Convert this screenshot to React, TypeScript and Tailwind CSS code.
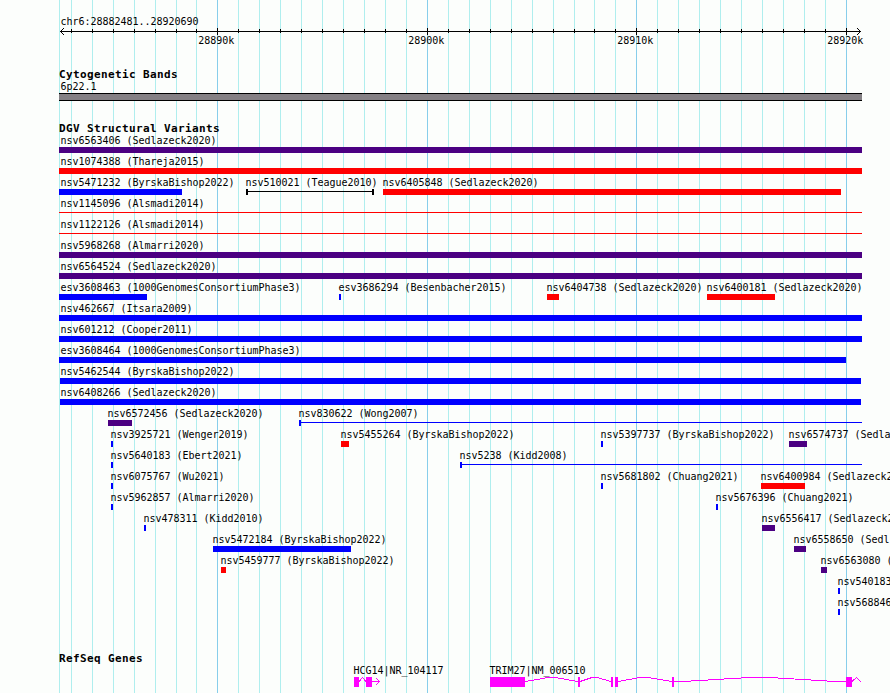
import React from "react";

type Glyph = "bar" | "line" | "span" | "open";

interface Feature {
  label: string;
  start: number;
  end: number;
  color: string;
  glyph?: Glyph;
}

const PURPLE = "bg-[#4b0082]";
const RED = "bg-[#ff0000]";
const BLUE = "bg-[#0000ff]";
const BLACK = "bg-black";

const LEFT = 59;
const RIGHT = 862;

const MINOR = [
  59, 71, 92, 113, 134, 155, 176, 196, 238, 259, 280, 301, 322, 343, 364, 385, 406, 448, 469, 490,
  511, 532, 553, 574, 594, 615, 657, 678, 699, 720, 741, 762, 783, 804, 825,
];
const MAJOR = [217, 427, 636, 846];
const SCALE_LABELS = ["28890k", "28900k", "28910k", "28920k"];

const f = (label: string, start: number, end: number, color: string, glyph: Glyph = "bar"): Feature => ({
  label,
  start,
  end,
  color,
  glyph,
});

const ROWS: Feature[][] = [
  [f("nsv6563406 (Sedlazeck2020)", 59, 862, PURPLE)],
  [f("nsv1074388 (Thareja2015)", 59, 862, RED)],
  [
    f("nsv5471232 (ByrskaBishop2022)", 59, 182, BLUE),
    f("nsv510021 (Teague2010)", 246, 374, BLACK, "span"),
    f("nsv6405848 (Sedlazeck2020)", 383, 841, RED),
  ],
  [f("nsv1145096 (Alsmadi2014)", 59, 862, RED, "line")],
  [f("nsv1122126 (Alsmadi2014)", 59, 862, RED, "line")],
  [f("nsv5968268 (Almarri2020)", 59, 862, PURPLE)],
  [f("nsv6564524 (Sedlazeck2020)", 59, 862, PURPLE)],
  [
    f("esv3608463 (1000GenomesConsortiumPhase3)", 59, 147, BLUE),
    f("esv3686294 (Besenbacher2015)", 339, 341, BLUE),
    f("nsv6404738 (Sedlazeck2020)", 547, 559, RED),
    f("nsv6400181 (Sedlazeck2020)", 707, 775, RED),
  ],
  [f("nsv462667 (Itsara2009)", 59, 862, BLUE)],
  [f("nsv601212 (Cooper2011)", 59, 862, BLUE)],
  [f("esv3608464 (1000GenomesConsortiumPhase3)", 59, 846, BLUE)],
  [f("nsv5462544 (ByrskaBishop2022)", 60, 861, BLUE)],
  [f("nsv6408266 (Sedlazeck2020)", 60, 861, BLUE)],
  [
    f("nsv6572456 (Sedlazeck2020)", 108, 132, PURPLE),
    f("nsv830622 (Wong2007)", 299, 862, BLUE, "open"),
  ],
  [
    f("nsv3925721 (Wenger2019)", 111, 113, BLUE),
    f("nsv5455264 (ByrskaBishop2022)", 341, 349, RED),
    f("nsv5397737 (ByrskaBishop2022)", 601, 603, BLUE),
    f("nsv6574737 (Sedla", 789, 807, PURPLE),
  ],
  [
    f("nsv5640183 (Ebert2021)", 111, 113, BLUE),
    f("nsv5238 (Kidd2008)", 460, 862, BLUE, "open"),
  ],
  [
    f("nsv6075767 (Wu2021)", 111, 113, BLUE),
    f("nsv5681802 (Chuang2021)", 601, 603, BLUE),
    f("nsv6400984 (Sedlazeck2", 761, 805, RED),
  ],
  [
    f("nsv5962857 (Almarri2020)", 111, 113, BLUE),
    f("nsv5676396 (Chuang2021)", 716, 718, BLUE),
  ],
  [
    f("nsv478311 (Kidd2010)", 144, 146, BLUE),
    f("nsv6556417 (Sedlazeck2", 762, 775, PURPLE),
  ],
  [
    f("nsv5472184 (ByrskaBishop2022)", 213, 351, BLUE),
    f("nsv6558650 (Sedl", 794, 806, PURPLE),
  ],
  [
    f("nsv5459777 (ByrskaBishop2022)", 221, 226, RED),
    f("nsv6563080 (", 821, 827, PURPLE),
  ],
  [f("nsv540183", 838, 840, BLUE)],
  [f("nsv568846", 838, 840, BLUE)],
];

function Label({ x, children }: { x: number; children: React.ReactNode }) {
  return (
    <div
      className="h-3 w-max whitespace-pre text-[10px] leading-3 tracking-[-0.0205px]"
      style={{ marginLeft: x }}
    >
      {children}
    </div>
  );
}

function Title({ children }: { children: React.ReactNode }) {
  return (
    <h2 className="ml-[59px] h-[13px] w-max text-[11px] leading-[14px] font-bold tracking-[0.378px] whitespace-pre">
      {children}
    </h2>
  );
}

function FeatureGlyph({ feature }: { feature: Feature }) {
  const { start, end, color, glyph } = feature;
  const box = { marginLeft: start, width: end - start };
  if (glyph === "bar") return <div className={`h-1.5 ${color}`} style={box} />;
  return (
    <div className="flex h-1.5 items-start" style={box}>
      {glyph !== "line" && <div className={`h-1.5 w-0.5 ${color}`} />}
      <div className={`mt-0.5 h-px flex-1 ${color}`} />
      {glyph === "span" && <div className={`h-1.5 w-0.5 ${color}`} />}
    </div>
  );
}

function TrackRow({ features }: { features: Feature[] }) {
  return (
    <div className="grid h-[21px] grid-cols-[890px]">
      {features.map((feature) => (
        <div key={feature.label} className="col-start-1 row-start-1">
          <Label x={feature.start <= 60 ? 60.5 : feature.start - 0.5}>{feature.label}</Label>
          <FeatureGlyph feature={feature} />
        </div>
      ))}
    </div>
  );
}

function GridLines() {
  return (
    <svg className="absolute inset-0" width="890" height="693" shapeRendering="crispEdges">
      {MINOR.map((x) => (
        <rect key={x} x={x} y="0" width="1" height="693" fill="#afeeee" />
      ))}
      {MAJOR.map((x) => (
        <rect key={x} x={x} y="0" width="1" height="693" fill="#87ceeb" />
      ))}
    </svg>
  );
}

function Ruler() {
  return (
    <svg className="block" width="890" height="8" viewBox="0 28 890 8" shapeRendering="crispEdges">
      <rect x="60" y="31" width="801" height="1" />
      {MINOR.filter((x) => x > LEFT).map((x) => (
        <rect key={x} x={x} y="29" width="1" height="4" />
      ))}
      {MAJOR.map((x) => (
        <rect key={x} x={x} y="28" width="1" height="7" />
      ))}
      {[1, 2, 3].map((d) => (
        <g key={d}>
          <rect x={60 + d} y={31 - d} width="1" height="1" />
          <rect x={60 + d} y={31 + d} width="1" height="1" />
          <rect x={RIGHT - 2 - d} y={31 - d} width="1" height="1" />
          <rect x={RIGHT - 2 - d} y={31 + d} width="1" height="1" />
        </g>
      ))}
    </svg>
  );
}

const EXONS: [number, number][] = [
  [354, 5], [366, 6], [490, 35], [578, 2], [611, 2], [615, 3], [672, 2], [846, 6],
];

const INTRONS = [
  "359,681.5 362.5,677.5 366,681.5",
  "525,681.5 543,678.5 547,677.5 555,677.5 578,681.5",
  "580,681.5 592,677.5 597,677.5 611,681.5",
  "618,681.5 640,677.5 648,677.5 672,681.5",
  "674,681.5 683,681.5 749,677.5 770,677.5 835,681.5 846,681.5",
  "852,681.5 856.5,677.5 861,682",
];

function Genes() {
  return (
    <svg className="block" width="890" height="16" viewBox="0 677 890 16" shapeRendering="crispEdges">
      <g fill="none" stroke="#ff00ff" strokeWidth="1">
        {INTRONS.map((points) => (
          <polyline key={points} points={points} />
        ))}
        <path d="M372 681.5H380M376 678L379.5 681.5L376 685" />
      </g>
      {EXONS.map(([x, width]) => (
        <rect key={x} x={x} y="677" width={width} height="10" fill="#ff00ff" />
      ))}
    </svg>
  );
}

export default function App() {
  return (
    <main className="relative h-[693px] w-[890px] overflow-hidden bg-[#fcfefc] font-['DejaVu_Sans_Mono','Liberation_Mono',monospace] text-black">
      <GridLines />
      <div className="relative flex flex-col">
        <section className="pt-4">
          <Label x={60.5}>chr6:28882481..28920690</Label>
          <Ruler />
          <div className="-mt-px grid grid-cols-[890px]">
            {MAJOR.map((x, i) => (
              <div key={x} className="col-start-1 row-start-1">
                <Label x={x - 18.8}>{SCALE_LABELS[i]}</Label>
              </div>
            ))}
          </div>
        </section>
        <section className="pt-[21px]">
          <Title>Cytogenetic Bands</Title>
          <Label x={60.5}>6p22.1</Label>
          <div className="ml-[59px] h-2 w-[803px] border-y border-black bg-[#848084]" />
        </section>
        <section className="pt-[21px]">
          <Title>DGV Structural Variants</Title>
          <div>
            {ROWS.map((features) => (
              <TrackRow key={features[0].label} features={features} />
            ))}
          </div>
        </section>
        <section className="pt-[34px]">
          <Title>RefSeq Genes</Title>
          <div className="grid grid-cols-[890px]">
            <div className="col-start-1 row-start-1">
              <Label x={353.4}>HCG14|NR_104117</Label>
            </div>
            <div className="col-start-1 row-start-1">
              <Label x={489.6}>TRIM27|NM_006510</Label>
            </div>
          </div>
          <Genes />
        </section>
      </div>
    </main>
  );
}
